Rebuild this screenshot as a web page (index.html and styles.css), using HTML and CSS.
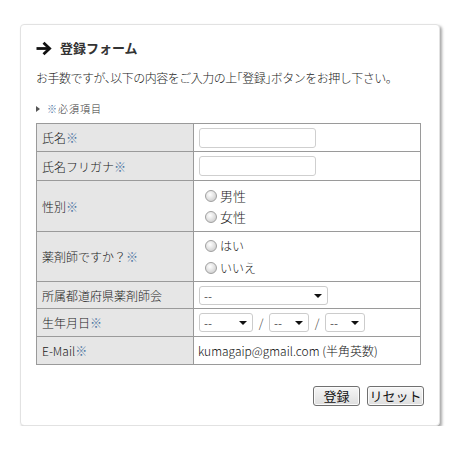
FILE: index.html
```html
<!DOCTYPE html>
<html lang="ja">
<head>
<meta charset="utf-8">
<title>登録フォーム</title>
<link rel="stylesheet" href="styles.css">
</head>
<body>
<div class="card">
  <h1 class="title">
    <svg class="arrow" width="16" height="15" viewBox="0 0 16 15" aria-hidden="true">
      <path d="M0.5 7.5 H13" stroke="#111" stroke-width="2.8" fill="none"/>
      <path d="M7.5 1.8 L13.6 7.5 L7.5 13.2" stroke="#111" stroke-width="2.8" fill="none" stroke-linejoin="miter"/>
    </svg>
    <span>登録フォーム</span>
  </h1>
  <p class="desc">お手数ですが、以下の内容をご入力の上「登録」ボタンをお押し下さい。</p>
  <p class="note"><span class="tri"></span><span class="req">※</span>必須項目</p>

  <div class="form">
    <div class="lab">氏名<span class="req">※</span></div>
    <div class="val"><input class="txt" type="text"></div>

    <div class="lab">氏名フリガナ<span class="req">※</span></div>
    <div class="val"><input class="txt" type="text"></div>

    <div class="lab">性別<span class="req">※</span></div>
    <div class="val radios">
      <label class="opt"><input type="radio" name="sex">男性</label>
      <label class="opt"><input type="radio" name="sex">女性</label>
    </div>

    <div class="lab">薬剤師ですか？<span class="req">※</span></div>
    <div class="val radios tall">
      <label class="opt"><input type="radio" name="ph">はい</label>
      <label class="opt"><input type="radio" name="ph">いいえ</label>
    </div>

    <div class="lab">所属都道府県薬剤師会</div>
    <div class="val">
      <span class="sel wide"><select><option>--</option></select></span>
    </div>

    <div class="lab">生年月日<span class="req">※</span></div>
    <div class="val dates">
      <span class="sel year"><select><option>--</option></select></span>
      <span class="slash">/</span>
      <span class="sel md"><select><option>--</option></select></span>
      <span class="slash">/</span>
      <span class="sel md"><select><option>--</option></select></span>
    </div>

    <div class="lab">E-Mail<span class="req">※</span></div>
    <div class="val mail">kumagaip@gmail.com (半角英数)</div>
  </div>

  <div class="buttons">
    <button class="btn reg" type="button">登録</button>
    <button class="btn rst" type="button">リセット</button>
  </div>
</div>
</body>
</html>
```

FILE: styles.css
```css
html, body {
  margin: 0;
  padding: 0;
  background: #fff;
}
body {
  font-family: "Noto Sans CJK JP", "Noto Sans", sans-serif;
  font-weight: 300;
  color: #222;
  font-size: 12px;
}
.card {
  box-sizing: border-box;
  width: 420px;
  margin: 24px 0 0 20px;
  padding: 15px 15px 19px 15px;
  border: 1px solid #e2e2e2;
  border-radius: 4px;
  background: #fff;
  box-shadow: 2px 2px 3px rgba(0, 0, 0, 0.35);
}
.title {
  display: flex;
  align-items: center;
  gap: 8px;
  margin: 0;
  height: 16px;
  font-size: 13px;
  line-height: 16px;
  font-weight: bold;
  color: #333;
}
.arrow {
  display: block;
}
.desc {
  margin: 14px 0 0 0;
  line-height: 16px;
  font-size: 12px;
  font-feature-settings: "halt";
  letter-spacing: -0.5px;
  white-space: nowrap;
  color: #222;
}
.note {
  display: flex;
  align-items: center;
  margin: 17px 0 0 0;
  height: 12px;
  line-height: 12px;
  font-size: 10px;
  letter-spacing: 1px;
  color: #333;
}
.tri {
  width: 0;
  height: 0;
  border-top: 3px solid transparent;
  border-bottom: 3px solid transparent;
  border-left: 4px solid #555;
  margin-right: 7px;
}
.req {
  color: #4f77a3;
  font-weight: 400;
}
.form {
  display: grid;
  grid-template-columns: 157px 227px;
  grid-template-rows: 28px 29px 51px 50px 27px 28px 28px;
  width: 385px;
  box-sizing: border-box;
  margin-top: 8px;
  border-top: 1px solid #9a9a9a;
  border-left: 1px solid #9a9a9a;
}
.lab, .val {
  box-sizing: border-box;
  border-right: 1px solid #9a9a9a;
  border-bottom: 1px solid #9a9a9a;
  display: flex;
  align-items: center;
}
.lab {
  background: #e6e6e6;
  padding-left: 5px;
  color: #1a1a1a;
}
.val {
  padding-left: 5px;
  background: #fff;
}
.txt {
  box-sizing: border-box;
  width: 117px;
  height: 20px;
  margin: 0;
  border: 1px solid #cfcfcf;
  border-radius: 3px;
  font: inherit;
  padding: 0 3px;
}
.radios {
  flex-direction: column;
  align-items: flex-start;
  justify-content: center;
  padding-left: 11px;
}
.opt {
  display: flex;
  align-items: center;
  height: 21px;
  font-size: 13px;
  color: #1a1a1a;
}
.tall .opt {
  height: 22px;
  font-size: 12px;
}
.opt input {
  appearance: none;
  -webkit-appearance: none;
  box-sizing: border-box;
  width: 12px;
  height: 12px;
  margin: 0 3px 0 0;
  border: 1px solid #a0a0a0;
  border-radius: 50%;
  background: radial-gradient(circle at 40% 35%, #ffffff 0%, #e2e2e2 50%, #c2c2c2 100%);
}
.sel {
  position: relative;
  display: inline-block;
  height: 19px;
}
.sel select {
  appearance: none;
  -webkit-appearance: none;
  box-sizing: border-box;
  width: 100%;
  height: 19px;
  margin: 0;
  border: 1px solid #cccccc;
  border-radius: 3px;
  background: #fff;
  font: inherit;
  font-size: 12px;
  line-height: 17px;
  color: #111;
  padding: 0 0 0 4px;
}
.sel::after {
  content: "";
  position: absolute;
  right: 6px;
  top: 8px;
  width: 0;
  height: 0;
  border-left: 4px solid transparent;
  border-right: 4px solid transparent;
  border-top: 4px solid #111;
  pointer-events: none;
}
.wide {
  width: 129px;
}
.year {
  width: 54px;
}
.md {
  width: 40px;
}
.slash {
  width: 16px;
  text-align: center;
  color: #333;
}
.mail {
  padding-left: 4px;
  color: #111;
}
.buttons {
  display: flex;
  justify-content: flex-end;
  gap: 7px;
  margin-top: 21px;
}
.btn {
  box-sizing: border-box;
  height: 20px;
  margin: 0;
  padding: 0;
  border: 1px solid #707070;
  border-radius: 3px;
  background: linear-gradient(#f6f6f6, #dedede);
  box-shadow: inset 0 0 0 1px #fbfbfb;
  font: inherit;
  font-size: 13px;
  font-weight: 400;
  line-height: 18px;
  color: #111;
}
.reg {
  width: 47px;
}
.rst {
  width: 57px;
}
```
